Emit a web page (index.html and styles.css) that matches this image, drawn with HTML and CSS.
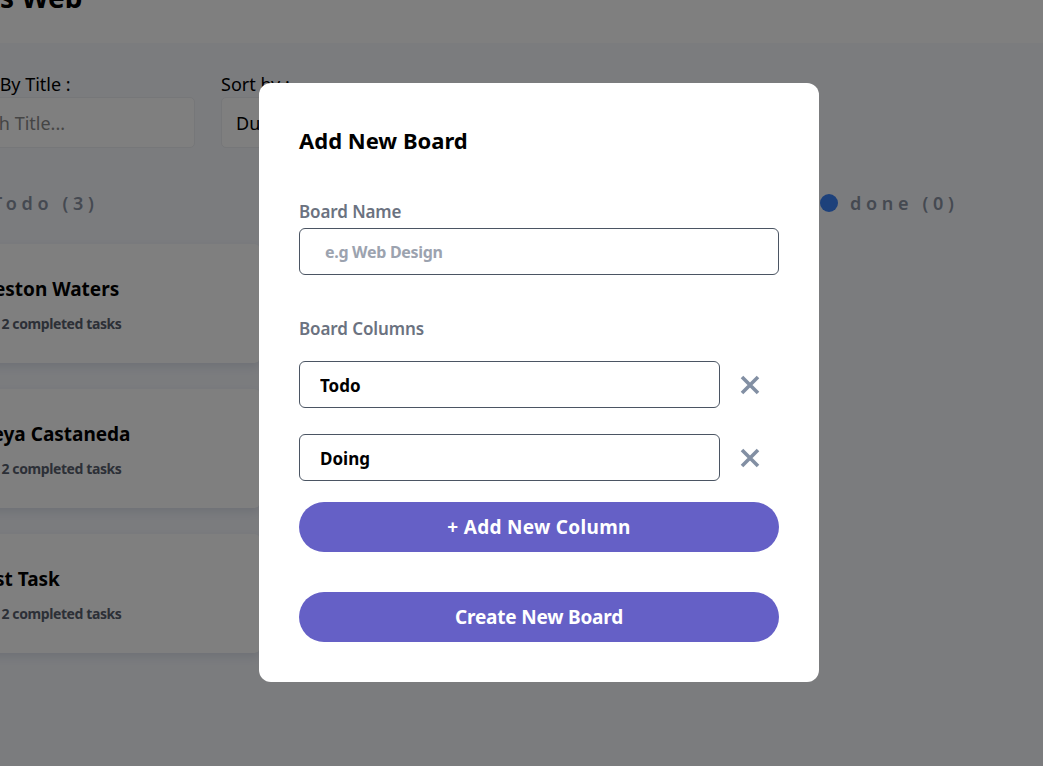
FILE: index.html
```html
<!DOCTYPE html>
<html lang="en">
<head>
<meta charset="utf-8">
<title>Tasks Web</title>
<link rel="stylesheet" href="styles.css">
</head>
<body>
<div class="app">
  <header class="topbar">
    <h1 class="brand">Tasks Web</h1>
  </header>
  <main class="main">
    <section class="filters">
      <div class="field">
        <label class="field-label">Search By Title :</label>
        <input class="field-input search" type="text" placeholder="Search Title...">
      </div>
      <div class="field">
        <label class="field-label">Sort by :</label>
        <div class="field-input select">Due Date</div>
      </div>
    </section>
    <section class="board">
      <div class="column">
        <h2 class="col-head"><span class="dot dot-todo"></span>Todo (3)</h2>
        <div class="card"><h3 class="card-title">Preston Waters</h3><p class="card-sub">0 of 2 completed tasks</p></div>
        <div class="card"><h3 class="card-title">Freya Castaneda</h3><p class="card-sub">0 of 2 completed tasks</p></div>
        <div class="card"><h3 class="card-title">Test Task</h3><p class="card-sub">0 of 2 completed tasks</p></div>
      </div>
      <div class="column">
        <h2 class="col-head"><span class="dot dot-doing"></span>doing (0)</h2>
      </div>
      <div class="column">
        <h2 class="col-head"><span class="dot dot-done"></span>done (0)</h2>
      </div>
    </section>
  </main>
</div>

<div class="overlay">
  <form class="modal">
    <h2 class="modal-title">Add New Board</h2>
    <label class="m-label first">Board Name</label>
    <input class="m-input name" type="text" placeholder="e.g Web Design">
    <label class="m-label second">Board Columns</label>
    <div class="col-row">
      <input class="m-input col" type="text" value="Todo">
      <button type="button" class="remove" aria-label="Remove">
        <svg width="22" height="22" viewBox="0 0 22 22"><path d="M3 3 L19 19 M19 3 L3 19" stroke="#828fa3" stroke-width="3.6" stroke-linecap="butt"/></svg>
      </button>
    </div>
    <div class="col-row last">
      <input class="m-input col" type="text" value="Doing">
      <button type="button" class="remove" aria-label="Remove">
        <svg width="22" height="22" viewBox="0 0 22 22"><path d="M3 3 L19 19 M19 3 L3 19" stroke="#828fa3" stroke-width="3.6" stroke-linecap="butt"/></svg>
      </button>
    </div>
    <button type="button" class="pill add">+ Add New Column</button>
    <button type="button" class="pill create">Create New Board</button>
  </form>
</div>
</body>
</html>
```

FILE: styles.css
```css
* { box-sizing: border-box; }
html, body { margin: 0; padding: 0; }
body {
  font-family: "Noto Sans", "Open Sans", sans-serif;
  background: #f6f8fd;
  width: 1043px;
  height: 766px;
  overflow: hidden;
  color: #000;
}
.app { margin-left: -62px; width: 1300px; }
.topbar {
  height: 43px;
  background: #ffffff;
  overflow: hidden;
}
.brand {
  margin: -20px 0 0 0;
  font-size: 28px;
  line-height: 34px;
  font-weight: 700;
}
.main { padding-top: 28px; }
.filters { display: flex; gap: 26px; }
.field { display: flex; flex-direction: column; gap: 0; }
.field-label { font-size: 18px; line-height: 26px; color: #000; }
.field-input {
  width: 257px;
  height: 51px;
  border: 1px solid #eceef2;
  border-radius: 5px;
  background: #fff;
  font-family: inherit;
  font-size: 18px;
  padding: 0 14px;
  display: flex;
  align-items: center;
}
.search::placeholder { color: #8a8a8a; }
.select { color: #000; }
.board { display: flex; gap: 128px; padding-left: 22px; margin-top: 43px; }
.column { width: 300px; display: flex; flex-direction: column; gap: 26px; }
.col-head {
  margin: 0 0 3px 0;
  display: flex;
  align-items: center;
  gap: 12px;
  font-size: 18px;
  line-height: 24px;
  font-weight: 600;
  letter-spacing: 0.26em;
  color: #8a93a3;
}
.column:first-child .col-head { margin-left: 2px; }
.column:last-child .col-head { margin-left: 4px; }
.dot { width: 18px; height: 18px; border-radius: 50%; display: inline-block; }
.dot-todo { background: #49c4e5; }
.dot-doing { background: #8471f2; }
.dot-done { background: #3b82f6; }
.card {
  height: 119px;
  background: #fff;
  border-radius: 6px;
  padding: 32px 22px 0 14px;
  box-shadow: 0 4px 8px rgba(54, 78, 126, 0.12);
}
.card-title { margin: 0; font-size: 19px; line-height: 26px; font-weight: 700; }
.card-sub { margin: 12px 0 0 0; font-size: 14px; line-height: 20px; font-weight: 700; color: #59606e; letter-spacing: -0.4px; }

.overlay {
  position: fixed;
  inset: 0;
  background: rgba(0, 0, 0, 0.5);
}
.modal {
  position: absolute;
  left: 259px;
  top: 83px;
  width: 560px;
  background: #fff;
  border-radius: 12px;
  padding: 42px 40px 40px 40px;
  display: flex;
  flex-direction: column;
}
.modal-title {
  margin: 0;
  font-size: 22px;
  line-height: 30px;
  font-weight: 700;
  color: #000;
}
.m-label {
  font-size: 17px;
  line-height: 24px;
  font-weight: 600;
  color: #6b7280;
  letter-spacing: -0.1px;
}
.m-label.first { margin-top: 45px; }
.m-label.second { margin-top: 42px; margin-bottom: 20px; }
.m-input {
  height: 47px;
  border: 1px solid #4b5563;
  border-radius: 6px;
  font-family: inherit;
  font-size: 17px;
  font-weight: 700;
  color: #000;
  outline: none;
  background: #fff;
}
.m-input.name { margin-top: 4px; padding: 0 25px; width: 480px; font-size: 16px; letter-spacing: -0.3px; }
.m-input.name::placeholder { color: #9ca3af; }
.m-input.col { flex: 1; padding: 0 20px; padding-top: 2px; }
.col-row { display: flex; align-items: center; margin-bottom: 26px; }
.col-row.last { margin-bottom: 21px; }
.remove {
  width: 59px;
  height: 47px;
  border: 0;
  background: transparent;
  padding: 0;
  display: flex;
  align-items: center;
  justify-content: center;
}
.pill {
  height: 50px;
  border: 0;
  border-radius: 25px;
  background: #6560c6;
  color: #fff;
  font-family: inherit;
  font-size: 19px;
  font-weight: 700;
  letter-spacing: -0.2px;
}
.pill.add { letter-spacing: 0.3px; }
.pill.create { margin-top: 40px; }
```
